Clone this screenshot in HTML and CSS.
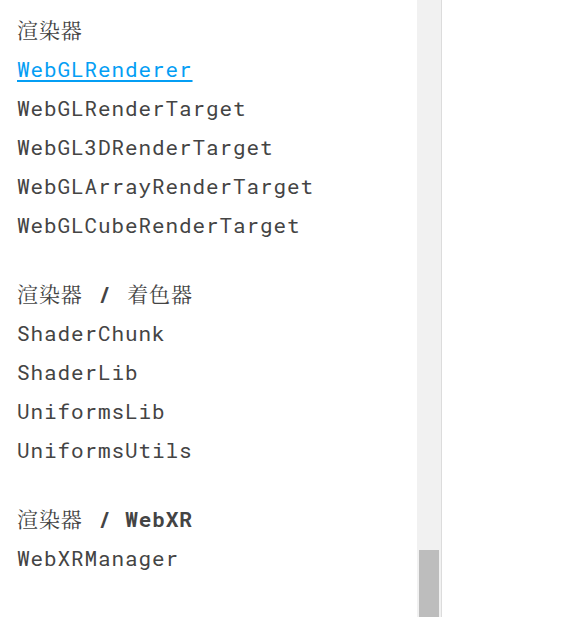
FILE: index.html
```html
<!DOCTYPE html>
<html lang="zh">
<head>
<meta charset="utf-8">
<link rel="stylesheet" href="styles.css">
</head>
<body>
<div class="layout">
  <nav class="panel">
    <div class="group">
      <h3 class="cat">渲染器</h3>
      <ul class="list">
        <li><a class="link active" href="#">WebGLRenderer</a></li>
        <li><a class="link" href="#">WebGLRenderTarget</a></li>
        <li><a class="link" href="#">WebGL3DRenderTarget</a></li>
        <li><a class="link" href="#">WebGLArrayRenderTarget</a></li>
        <li><a class="link" href="#">WebGLCubeRenderTarget</a></li>
      </ul>
    </div>
    <div class="group">
      <h3 class="cat">渲染器 <b class="sep">/</b> 着色器</h3>
      <ul class="list">
        <li><a class="link" href="#">ShaderChunk</a></li>
        <li><a class="link" href="#">ShaderLib</a></li>
        <li><a class="link" href="#">UniformsLib</a></li>
        <li><a class="link" href="#">UniformsUtils</a></li>
      </ul>
    </div>
    <div class="group">
      <h3 class="cat">渲染器 <b class="sep">/ WebXR</b></h3>
      <ul class="list">
        <li><a class="link" href="#">WebXRManager</a></li>
      </ul>
    </div>
    <div class="group">
      <h3 class="cat">场景</h3>
      <ul class="list">
        <li><a class="link" href="#">Fog</a></li>
      </ul>
    </div>
  </nav>
  <div class="track"><div class="thumb"></div></div>
  <div class="main"></div>
</div>
</body>
</html>
```
FILE: styles.css
```css
html, body {
  margin: 0;
  padding: 0;
  background: #fff;
  height: 100%;
  overflow: hidden;
}
.layout {
  display: flex;
  height: 617px;
  overflow: hidden;
}
.panel {
  width: 400px;
  flex: none;
  padding: 11px 0 0 17px;
  font-family: "Roboto Mono", "Noto Serif CJK SC", "DejaVu Sans Mono", monospace;
  font-size: 21px;
  letter-spacing: 0.9px;
  line-height: 39px;
  color: #444;
}
.group {
  margin-bottom: 30px;
}
.cat {
  margin: 0;
  font-size: 21px;
  font-weight: 400;
  line-height: 39px;
  color: #444;
}
.sep {
  font-weight: 700;
  margin: 0 2px;
}
.list {
  list-style: none;
  margin: 0;
  padding: 0;
}
.list li {
  line-height: 39px;
}
.link {
  color: #444;
  text-decoration: none;
}
.link.active {
  color: #049ef4;
  text-decoration: underline;
  text-underline-offset: 3px;
}
.track {
  width: 25px;
  flex: none;
  background: #f1f1f1;
  border-right: 1px solid #dcdcdc;
  padding: 550px 2px 0;
  box-sizing: border-box;
}
.thumb {
  height: 200px;
  background: #bdbdbd;
}
.main {
  flex: 1;
}
```
